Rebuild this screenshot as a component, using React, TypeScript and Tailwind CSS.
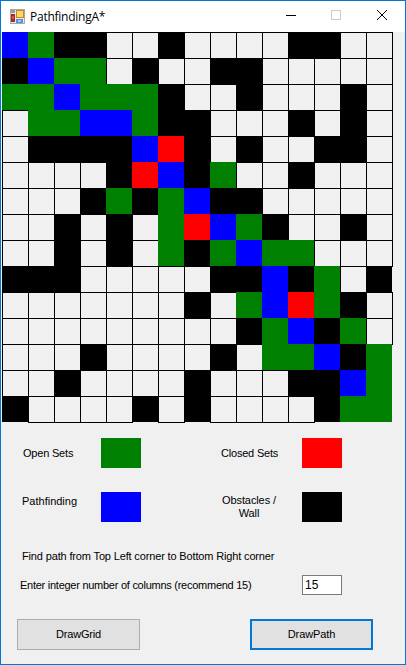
import React from 'react';

const rows = [
  'BGKKWWKWWWWKKWW',
  'KBGGWKWWKKWWWWW',
  'GGBGGGKWWKWWWKW',
  'WGGBBGKKWWWKWKW',
  'WKKKKBRKWKWWKKW',
  'WWWWKRBKGWWKWWW',
  'WWWKGKGBKKWWWWW',
  'WWKWKWGRBGKWWKW',
  'WWKWKWGKGBGGWWW',
  'KKKWWWWWKKBKGWK',
  'WWWWWWWKWGBRGKW',
  'WWWWWWWWWKGBKGW',
  'WWWKWWWWKWGGBKG',
  'WWKWWWWKWWWKKBG',
  'KWWWWKWKWWWWKGG',
];

const cellClass: Record<string, string> = {
  W: 'w-[27px] h-[27px] bg-[#f0f0f0] border border-black',
  K: 'w-[26px] h-[26px] bg-black',
  G: 'w-[26px] h-[26px] bg-[#008000]',
  B: 'w-[26px] h-[26px] bg-[#0000ff]',
  R: 'w-[26px] h-[26px] bg-[#ff0000]',
};

const AppIcon = () => (
  <svg width="15" height="15" viewBox="0 0 15 15" className="shrink-0">
    <rect x="0.5" y="0.5" width="14" height="14" fill="#e8e8e8" stroke="#a8a8a8" />
    <rect x="1" y="1" width="4" height="3" fill="#9a9a9a" />
    <rect x="6" y="1" width="8" height="8" fill="#c98a1c" />
    <rect x="7" y="2" width="6" height="6" fill="#fbd86a" />
    <rect x="1" y="5" width="4" height="8" fill="#a32a2a" />
    <rect x="2" y="7" width="2" height="3" fill="#e05050" />
    <rect x="6" y="10" width="7" height="4" fill="#5c8fd8" />
    <rect x="8" y="11" width="3" height="2" fill="#a9c9f0" />
  </svg>
);

const Swatch = ({ color }: { color: string }) => <div className={`w-10 h-[30px] ${color}`} />;

export default function App() {
  return (
    <div className="w-[406px] h-[665px] flex flex-col border border-[#0078d7] bg-[#f0f0f0] text-[11px] leading-[13px] text-black font-['Liberation_Sans',Arial,sans-serif]">
      <div className="h-[31px] shrink-0 bg-white flex items-center pl-[9px]">
        <AppIcon />
        <span className="ml-[5px] text-[12px] tracking-[-0.25px] font-['Open_Sans',sans-serif]">PathfindingA*</span>
        <div className="ml-auto flex self-start">
          <svg width="46" height="30" viewBox="0 0 46 30">
            <rect x="19" y="14" width="10" height="1" fill="#000" />
          </svg>
          <svg width="46" height="30" viewBox="0 0 46 30">
            <rect x="18.5" y="9.5" width="9" height="9" fill="none" stroke="#cccccc" />
          </svg>
          <svg width="46" height="30" viewBox="0 0 46 30">
            <path d="M18 9 L28 19 M28 9 L18 19" stroke="#000" strokeWidth="1" fill="none" />
          </svg>
        </div>
      </div>

      <div className="ml-px grid grid-cols-[repeat(15,26px)] grid-rows-[repeat(15,26px)] w-[390px] h-[390px] shrink-0">
        {rows.flatMap((row, y) =>
          row.split('').map((c, x) => <div key={`${y}-${x}`} className={cellClass[c]} />)
        )}
      </div>

      <div className="mt-4 ml-px grid grid-cols-[99px_40px_161px_40px] gap-y-6 items-center">
        <span className="pl-[21px] tracking-[-0.2px]">Open Sets</span>
        <Swatch color="bg-[#008000]" />
        <span className="pl-[80px] tracking-[-0.2px]">Closed Sets</span>
        <Swatch color="bg-[#ff0000]" />
        <span className="pl-[20px] pt-[3px] self-start">Pathfinding</span>
        <Swatch color="bg-[#0000ff]" />
        <span className="pl-[76px] text-center w-[140px] tracking-[-0.1px]">Obstacles / Wall</span>
        <Swatch color="bg-black" />
      </div>

      <p className="mt-[28px] ml-[21px] tracking-[-0.15px]">Find path from Top Left corner to Bottom Right corner</p>

      <div className="mt-[12px] ml-[19px] flex items-center">
        <span className="w-[282px] pt-px tracking-[-0.26px]">Enter integer number of columns (recommend 15)</span>
        <input
          readOnly
          value="15"
          className="w-10 h-5 bg-white border border-[#7a7a7a] px-[2px] text-[12px] outline-none font-['Liberation_Sans',Arial,sans-serif]"
        />
      </div>

      <div className="mt-6 ml-4 flex gap-[110px]">
        <button className="w-[123px] h-[31px] bg-[#e1e1e1] border border-[#adadad] tracking-[-0.2px]">DrawGrid</button>
        <button className="w-[123px] h-[31px] bg-[#e1e1e1] border-2 border-[#0078d7] tracking-[-0.1px]">DrawPath</button>
      </div>
    </div>
  );
}
